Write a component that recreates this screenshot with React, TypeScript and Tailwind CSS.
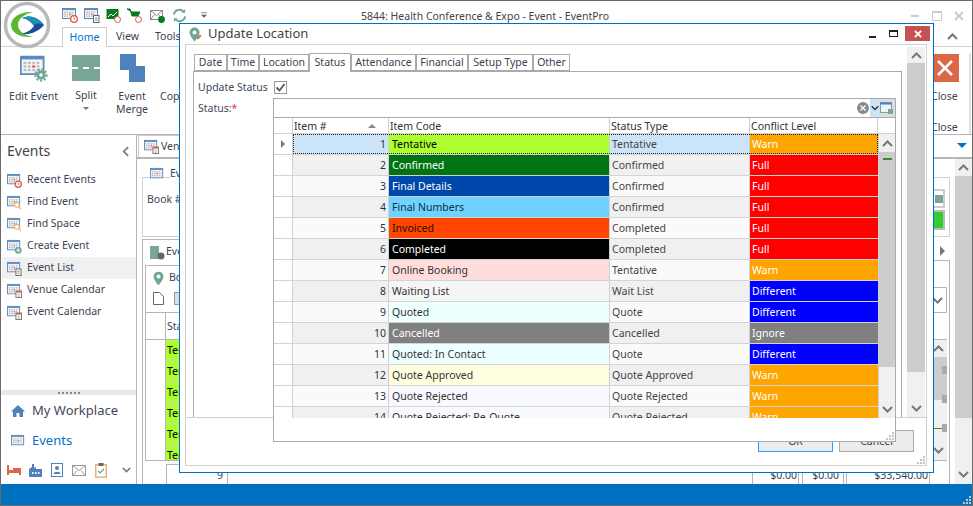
import React from "react";

type Badge = "clock" | "search" | "plus" | "doc" | "cal" | "gear" | "none";

function Cal({ badge = "none", className = "w-4 h-4" }: { badge?: Badge; className?: string }) {
  return (
    <svg viewBox="0 0 16 16" className={className}>
      <rect x="0.500" y="1.500" width="13" height="10" fill="#f4f4f4" stroke="#5b8bbd" />
      <rect x="0.500" y="1.500" width="13" height="1.600" fill="#5b8bbd" />
      {[2, 4.5, 7, 9.5].map((x) =>
        [4.5, 6.5, 8.5].map((y) => <rect key={`${x}-${y}`} x={x} y={y} width="1.600" height="1.300" fill={x === 7 && y === 6.5 ? "#d9534f" : "#bdbdbd"} />)
      )}
      {badge === "clock" && (
        <g>
          <circle cx="12" cy="12" r="3.300" fill="#fff" stroke="#d9534f" strokeWidth="1.300" />
          <path d="M12 10.200V12h1.500" stroke="#d9534f" fill="none" strokeWidth="0.800" />
        </g>
      )}
      {badge === "search" && (
        <g fill="none" stroke="#e8b26b" strokeWidth="1.200">
          <circle cx="10.500" cy="10.500" r="2.600" fill="#fff" />
          <path d="M12.500 12.500 15 15" />
        </g>
      )}
      {badge === "plus" && (
        <g>
          <circle cx="12" cy="12" r="3.600" fill="#6ea797" />
          <path d="M12 10v4M10 12h4" stroke="#fff" strokeWidth="1" />
        </g>
      )}
      {badge === "doc" && (
        <g>
          <rect x="9.500" y="8.500" width="5.500" height="7" fill="#fff" stroke="#666" />
          <path d="M11 11h2.500M11 13h2.500" stroke="#666" strokeWidth="0.800" />
        </g>
      )}
      {badge === "cal" && (
        <g>
          <rect x="9.500" y="8.500" width="6" height="7" fill="#fff" stroke="#777" />
          <rect x="9.500" y="8.500" width="6" height="1.800" fill="#dd6647" />
          <path d="M11 12h3M11 14h3" stroke="#999" strokeWidth="0.800" />
        </g>
      )}
      {badge === "gear" && (
        <g>
          <circle cx="12" cy="12" r="2.700" fill="#6ea797" />
          <circle cx="12" cy="12" r="3.300" fill="none" stroke="#6ea797" strokeWidth="1" strokeDasharray="1.200 1" />
          <circle cx="12" cy="12" r="1" fill="#fff" />
        </g>
      )}
    </svg>
  );
}

function Pin({ className = "w-3 h-4" }: { className?: string }) {
  return (
    <svg viewBox="0 0 12 16" className={className}>
      <path d="M6 0.500a5.400 5.400 0 0 0-5.400 5.400C.6 9.500 6 15.500 6 15.500s5.400-6 5.400-9.600A5.400 5.400 0 0 0 6 .5z" fill="#6ea797" />
      <circle cx="6" cy="5.800" r="2.200" fill="#fff" />
    </svg>
  );
}

function Chevron({ dir, className = "w-[11px] h-[7px]", color = "#777" }: { dir: "up" | "down"; className?: string; color?: string }) {
  return (
    <svg viewBox="0 0 11 7" className={className}>
      <path d={dir === "up" ? "M1 6l4.500-4.500L10 6" : "M1 1l4.500 4.500L10 1"} fill="none" stroke={color} strokeWidth="2" />
    </svg>
  );
}

function Logo() {
  return (
    <svg viewBox="0 0 48 48" className="w-[48px] h-[48px] shrink-0">
      <circle cx="24" cy="24" r="21.500" fill="#fff" stroke="#b9b9b9" strokeWidth="3.500" />
      <path d="M30 11C18 10 8 16 8 24C8 31 16 37 30 36C20 34 15 29 15 24C15 18 21 13 30 11z" fill="#58b833" />
      <path d="M19 17C28 13 36 17 41 24C36 30 28 34 19 33C25 31 29 28 31 25C28 21 25 18 19 17z" fill="#1b4d9b" />
      <path d="M19 17C28 13 36 17 41 24C37 22 32 22 31 25C28 21 25 18 19 17z" fill="#1f8fb8" />
    </svg>
  );
}

function Qat() {
  return (
    <div className="flex items-center h-[16px]">
      <Cal badge="clock" className="w-[16px] h-[16px]" />
      <Cal badge="doc" className="w-[16px] h-[16px] ml-[6px]" />
      <svg viewBox="0 0 15 15" className="w-[15px] h-[15px] ml-[6px]">
        <rect x="0.500" y="1" width="12" height="10" fill="#0a7a1e" />
        <path d="M2 9l3-3 2 2 4-4" stroke="#fff" fill="none" />
        <circle cx="11.500" cy="11.500" r="3" fill="#fff" stroke="#d9534f" />
      </svg>
      <svg viewBox="0 0 15 15" className="w-[15px] h-[15px] ml-[6px]">
        <path d="M0 1h3l2 7h6l2-4H5z" fill="#0a7a1e" stroke="#0a7a1e" />
        <circle cx="11.500" cy="11.500" r="3" fill="#fff" stroke="#d9534f" />
      </svg>
      <svg viewBox="0 0 15 15" className="w-[15px] h-[15px] ml-[8px]">
        <rect x="0.500" y="2.500" width="12" height="9" fill="#fff" stroke="#888" />
        <path d="M0.500 2.500l6 5 6-5M.5 11.500l4-5M12.500 11.500l-4-5" stroke="#888" fill="none" />
        <circle cx="11.500" cy="11.500" r="3.400" fill="#0a7a1e" />
      </svg>
      <svg viewBox="0 0 16 16" className="w-[15px] h-[15px] ml-[7px]">
        <path d="M2 7a6 6 0 0 1 10.500-3M14 9a6 6 0 0 1-10.500 3" stroke="#6ea797" strokeWidth="2" fill="none" />
        <path d="M14 1v4h-4zM2 15v-4h4z" fill="#6ea797" />
      </svg>
      <svg viewBox="0 0 8 7" className="w-[6px] h-[6px] ml-[14px]">
        <path d="M0 0h8v1H0zM0 3h8L4 7z" fill="#666" />
      </svg>
    </div>
  );
}

function Ribbon() {
  return (
    <div className="h-[134px] shrink-0 border-b border-[#b5b5b5] flex flex-col">
      <div className="flex h-[46px] border-b border-[#d0d0d0]">
        <div className="w-[56px] pl-[2px] pt-[0px]">
          <Logo />
        </div>
        <div className="flex-1 flex flex-col pl-[5px]">
          <div className="flex pt-[6px] h-[27px]">
            <Qat />
            <div className="flex-1 text-center pr-[148px] pt-[1px] text-[#444] leading-[16px]">5844: Health Conference &amp; Expo - Event - EventPro</div>
            <div className="flex items-center pr-[8px] pb-[2px]">
              <div className="w-[8px] h-[2px] bg-[#ccc]" />
              <div className="w-[10px] h-[10px] border border-t-2 border-[#ccc] ml-[13px]" />
              <svg viewBox="0 0 10 10" className="w-[10px] h-[10px] ml-[12px]"><path d="M1 1l8 8M9 1l-8 8" stroke="#ccc" strokeWidth="2" /></svg>
            </div>
          </div>
          <div className="flex h-[19px] items-stretch">
            <div className="w-[45px] border border-b-0 border-[#ccc] bg-white text-[#0072c6] text-center leading-[18px] -mb-[1px] z-10">Home</div>
            <div className="ml-[9px] leading-[19px]">View</div>
            <div className="ml-[16px] leading-[19px]">Tools</div>
            <div className="ml-auto mr-[14px] flex items-center">
              <Chevron dir="up" />
            </div>
          </div>
        </div>
      </div>
      <div className="flex flex-1 pt-[7px]">
        <div className="w-[65px] flex flex-col items-center">
          <Cal badge="gear" className="w-[28px] h-[28px]" />
          <div className="mt-[8px] leading-[13px]">Edit Event</div>
        </div>
        <div className="w-[40px] flex flex-col items-center">
          <div className="w-[28px] h-[26px] bg-[#79a699] flex items-center mt-[1px]">
            <div className="w-full border-t-2 border-dashed border-white" />
          </div>
          <div className="mt-[8px] leading-[13px]">Split</div>
          <div className="mt-[5px] w-0 h-0 border-x-[3px] border-x-transparent border-t-[3px] border-t-[#777]" />
        </div>
        <div className="w-[50px] flex flex-col items-center ml-[1px]">
          <div className="w-[25px] h-[28px] flex flex-col">
            <div className="w-[16px] h-[16px] bg-[#4f81bd]" />
            <div className="w-[16px] h-[16px] bg-[#4f81bd] ml-[9px] -mt-[4px]" />
          </div>
          <div className="mt-[8px] leading-[13px] text-center">Event<br />Merge</div>
        </div>
        <div className="ml-[3px] pt-[36px] leading-[13px]">Copy</div>
        <div className="ml-auto mr-[9px] w-[29px] flex flex-col">
          <div className="w-[28px] h-[28px] bg-[#dd6647] flex items-center justify-center">
            <svg viewBox="0 0 16 16" className="w-[16px] h-[16px]"><path d="M1 1l14 14M15 1L1 15" stroke="#fff" strokeWidth="2.500" /></svg>
          </div>
          <div className="mt-[8px] leading-[13px]">Close</div>
          <div className="mt-[18px] leading-[13px]">Close</div>
        </div>
        <div className="w-[2px] mr-[1px] bg-[#e0e0e0]" />
      </div>
    </div>
  );
}

const navItems: [string, Badge][] = [
  ["Recent Events", "clock"],
  ["Find Event", "search"],
  ["Find Space", "search"],
  ["Create Event", "plus"],
  ["Event List", "doc"],
  ["Venue Calendar", "cal"],
  ["Event Calendar", "cal"],
];

function Sidebar() {
  return (
    <div className="w-[136px] shrink-0 border-r border-[#b5b5b5] flex flex-col">
      <div className="flex items-center justify-between h-[34px] pl-[6px] pr-[7px] pb-[2px] text-[14px] leading-[20px] text-[#444]">
        <span>Events</span>
        <svg viewBox="0 0 8 12" className="w-[7px] h-[11px]"><path d="M7 1L2 6l5 5" stroke="#777" strokeWidth="2" fill="none" /></svg>
      </div>
      <div className="flex flex-col pl-[1px]">
        {navItems.map(([label, b]) => (
          <div key={label} className={`h-[22px] flex items-center pl-[5px] gap-[5px] ${label === "Event List" ? "bg-[#f0f0f0]" : ""}`}>
            <Cal badge={b} className="w-[15px] h-[15px]" />
            <span>{label}</span>
          </div>
        ))}
      </div>
      <div className="flex-1" />
      <div className="h-[5px] bg-[#e8e8e8] flex items-center justify-center gap-[2px]">
        {[0, 1, 2, 3, 4, 5].map((i) => <div key={i} className="w-[2px] h-[2px] bg-[#888]" />)}
      </div>
      <div className="h-[30px] mt-[1px] flex items-center pl-[10px] gap-[7px] text-[13px] text-[#404a5a]">
        <svg viewBox="0 0 14 12" className="w-[14px] h-[12px]"><path d="M7 0L0 6.500h2V12h3.500V8h3v4H12V6.500h2z" fill="#4f81bd" /></svg>
        <span>My Workplace</span>
      </div>
      <div className="h-[30px] flex items-center pl-[10px] gap-[6px] text-[13px] text-[#0072c6]">
        <Cal className="w-[15px] h-[15px]" />
        <span>Events</span>
      </div>
      <div className="h-[28px] flex items-center pl-[6px]">
        <svg viewBox="0 0 14 10" className="w-[14px] h-[10px]"><path d="M0 0h2v5h4V3h8v7h-2V8H2v2H0z" fill="#dd6647" /></svg>
        <svg viewBox="0 0 13 13" className="w-[13px] h-[13px] ml-[8px]"><path d="M0 13V5l3-2V0h2v4l2-1v2h6v8z" fill="#4f81bd" /><path d="M3 8h1.500v2H3zM6 8h1.500v2H6zM9 8h1.500v2H9z" fill="#fff" /></svg>
        <svg viewBox="0 0 13 14" className="w-[13px] h-[14px] ml-[9px]"><rect x="0.500" y="0.500" width="11" height="13" fill="#fff" stroke="#4f81bd" /><circle cx="6" cy="5" r="2" fill="#4f81bd" /><path d="M2.500 11c0-3 7-3 7 0z" fill="#4f81bd" /></svg>
        <svg viewBox="0 0 14 11" className="w-[14px] h-[11px] ml-[8px]"><rect x="0.500" y="0.500" width="13" height="10" fill="#fff" stroke="#999" /><path d="M.5.500l6.500 5 6.500-5M.5 10.500l4.500-5M13.500 10.500l-4.500-5" stroke="#999" fill="none" /></svg>
        <svg viewBox="0 0 12 15" className="w-[12px] h-[15px] ml-[9px]"><rect x="0.750" y="1.750" width="10.500" height="12.500" fill="#fff" stroke="#e3b877" strokeWidth="1.500" /><rect x="3.500" y="0" width="5" height="3" fill="#666" /><path d="M3 8l2 2 4-4" stroke="#6ea797" fill="none" strokeWidth="1.200" /></svg>
        <svg viewBox="0 0 11 7" className="w-[9px] h-[6px] ml-[15px]"><path d="M1 1l4.500 4.500L10 1" fill="none" stroke="#777" strokeWidth="2" /></svg>
      </div>
    </div>
  );
}

function MainBehind() {
  return (
    <div className="flex-1 flex flex-col min-w-0">
      <div className="h-[24px] shrink-0 flex border-b-2 border-[#b5b5b5] pl-[1px] items-end">
        <div className="w-[60px] h-[22px] border border-b-0 border-[#ccc] flex items-center pl-[5px] gap-[2px] overflow-hidden">
          <Cal badge="cal" className="w-[15px] h-[15px] shrink-0" />
          <span>Venue</span>
        </div>
        <div className="ml-auto mr-[5px] mb-[9px] w-0 h-0 border-x-[5px] border-x-transparent border-t-[5px] border-t-[#0072c6]" />
      </div>
      <div className="flex-1 flex min-h-0">
        <div className="flex-1 flex flex-col min-w-0 pl-[5px] pr-[5px] pt-[18px]">
          <div className="h-[60px] shrink-0 border border-[#d0d0d0] flex flex-col">
            <div className="flex items-center h-[20px] -mt-[14px] pl-[7px] gap-[5px] shrink-0">
              <Cal className="w-[15px] h-[15px]" />
              <span className="bg-white">Event</span>
            </div>
            <div className="flex justify-between pl-[4px] pr-[4px] mt-[8px]">
              <span>Book #</span>
              <div className="flex flex-col -mt-[3px] gap-[2px]">
                <div className="w-[21px] h-[19px] border-2 border-[#ccc] bg-white flex items-center justify-end"><div className="w-[8px] h-[8px] bg-[#79a699]" /></div>
                <div className="w-[21px] h-[20px] border-2 border-[#bbb] bg-[#32cd32]" />
              </div>
            </div>
          </div>
          <div className="flex-1 min-h-0 mt-[2px] border-l border-[#b5b5b5] flex flex-col">
            <div className="h-[22px] shrink-0 flex">
              <div className="w-[37px] border-t border-[#b5b5b5] flex items-center pl-[6px] gap-[1px] pt-[2px]">
                <svg viewBox="0 0 16 16" className="w-[16px] h-[16px] shrink-0"><rect x="1" y="2" width="9" height="13" fill="#79a699" /><circle cx="12" cy="12" r="3.500" fill="#666" /></svg>
                <span>Event</span>
              </div>
              <div className="flex-1 border-b border-[#b5b5b5] flex justify-end items-center pr-[5px] pt-[2px]">
                <div className="w-0 h-0 border-y-[5px] border-y-transparent border-l-[5px] border-l-[#777]" />
              </div>
            </div>
            <div className="flex-1 min-h-0 border-r border-[#b5b5b5] flex flex-col pt-[4px]">
              <div className="flex-1 min-h-0 ml-[2px] mr-[2px] border-l border-[#b5b5b5] flex flex-col">
                <div className="h-[22px] shrink-0 w-[33px] border-t border-[#b5b5b5] flex items-center pl-[7px] gap-[5px] pt-[3px] overflow-hidden">
                  <Pin className="w-[11px] h-[15px] shrink-0" />
                  <span>Book</span>
                </div>
                <div className="h-[26px] shrink-0 border-b border-[#b5b5b5] flex pl-[7px] pt-[5px] gap-[10px] justify-between">
                  <div className="flex gap-[10px]">
                    <svg viewBox="0 0 11 13" className="w-[11px] h-[13px]"><path d="M.5.500h6l4 4v8H.5z" fill="#fff" stroke="#666" /></svg>
                    <svg viewBox="0 0 11 13" className="w-[11px] h-[13px]"><rect x="0.500" y="0.500" width="10" height="12" fill="#ddd" stroke="#999" /></svg>
                  </div>
                  <div className="w-[18px] -mt-[5px] border-t border-r border-[#b5b5b5] flex items-center justify-center">
                    <Chevron dir="down" />
                  </div>
                </div>
                <div className="h-[27px] shrink-0 border-b border-[#b5b5b5] pl-[19px] flex justify-between">
                  <div className="w-[60px] border-l border-[#b5b5b5] pl-[1px] leading-[26px]">Status</div>
                </div>
                <div className="h-[121px] shrink-0 flex border-b border-[#b5b5b5] overflow-hidden">
                  <div className="w-[19px] shrink-0" />
                  <div className="w-[62px] shrink-0 flex flex-col">
                    {[0, 1, 2, 3, 4, 5].map((i) => (
                      <div key={i} className="h-[21px] shrink-0 border-b border-[#d0d0d0] border-l border-l-[#b5b5b5] bg-[#adff2f] text-black leading-[20px] pl-[1px]">Tentative</div>
                    ))}
                  </div>
                  <div className="flex-1" />
                  <div className="w-[18px] shrink-0 bg-[#f0f0f0] flex flex-col relative">
                    <div className="h-[17px] shrink-0 flex items-center justify-center"><Chevron dir="up" /></div>
                    <div className="h-[43px] shrink-0 bg-[#ccc]" />
                    <div className="flex-1 flex items-end justify-center pb-[6px]"><Chevron dir="down" /></div>
                    <div className="absolute right-0 top-[26px] w-[5px] h-[8px] bg-[#aaa]" />
                    <div className="absolute right-0 top-[55px] w-[5px] h-[8px] bg-[#aaa]" />
                    <div className="absolute right-0 top-[84px] w-[5px] h-[8px] bg-[#aaa]" />
                    <div className="absolute left-0 right-[5px] top-[88px] h-[1px] bg-[#3c8a2e]" />
                  </div>
                </div>
              </div>
              <div className="h-[23px] shrink-0 flex pl-[23px] pr-[19px] pt-[3px]">
                <div className="w-[62px] border-x border-t border-[#b5b5b5] text-right pr-[4px] leading-[20px]">9</div>
                <div className="flex-1" />
                <div className="w-[47px] border-x border-t border-[#b5b5b5] text-right pr-[1px] leading-[20px]">$0.00</div>
                <div className="w-[42px] ml-[3px] border-x border-t border-[#b5b5b5] text-right pr-[4px] leading-[20px]">$0.00</div>
                <div className="w-[84px] ml-[2px] border-x border-t border-[#b5b5b5] text-right pr-[1px] leading-[20px]">$33,540.00</div>
              </div>
            </div>
          </div>
        </div>
        <div className="w-[17px] shrink-0 flex flex-col bg-[#f0f0f0]">
          <div className="h-[17px] flex items-center justify-center"><Chevron dir="up" /></div>
          <div className="h-[242px] bg-[#ccc]" />
          <div className="flex-1 flex items-end justify-center pb-[6px]"><Chevron dir="down" /></div>
        </div>
      </div>
    </div>
  );
}

type Row = { n: number; code: string; bg: string; fg: string; type: string; level: "Warn" | "Full" | "Different" | "Ignore" };

const rows: Row[] = [
  { n: 1, code: "Tentative", bg: "bg-[#adff2f]", fg: "text-black", type: "Tentative", level: "Warn" },
  { n: 2, code: "Confirmed", bg: "bg-[#007413]", fg: "text-white", type: "Confirmed", level: "Full" },
  { n: 3, code: "Final Details", bg: "bg-[#0047ab]", fg: "text-white", type: "Confirmed", level: "Full" },
  { n: 4, code: "Final Numbers", bg: "bg-[#6ed3ff]", fg: "text-[#1a2a3a]", type: "Confirmed", level: "Full" },
  { n: 5, code: "Invoiced", bg: "bg-[#ff4500]", fg: "text-[#221100]", type: "Completed", level: "Full" },
  { n: 6, code: "Completed", bg: "bg-black", fg: "text-white", type: "Completed", level: "Full" },
  { n: 7, code: "Online Booking", bg: "bg-[#ffdddd]", fg: "text-[#333]", type: "Tentative", level: "Warn" },
  { n: 8, code: "Waiting List", bg: "bg-[#f5f5f5]", fg: "text-[#333]", type: "Wait List", level: "Different" },
  { n: 9, code: "Quoted", bg: "bg-[#eeffff]", fg: "text-[#333]", type: "Quote", level: "Different" },
  { n: 10, code: "Cancelled", bg: "bg-[#808080]", fg: "text-white", type: "Cancelled", level: "Ignore" },
  { n: 11, code: "Quoted: In Contact", bg: "bg-[#eeffff]", fg: "text-[#333]", type: "Quote", level: "Different" },
  { n: 12, code: "Quote Approved", bg: "bg-[#ffffdf]", fg: "text-[#333]", type: "Quote Approved", level: "Warn" },
  { n: 13, code: "Quote Rejected", bg: "bg-[#f8f8ff]", fg: "text-[#333]", type: "Quote Rejected", level: "Warn" },
  { n: 14, code: "Quote Rejected: Re-Quote", bg: "bg-[#f8f8ff]", fg: "text-[#333]", type: "Quote Rejected", level: "Warn" },
];

const levelBg: Record<Row["level"], string> = {
  Warn: "bg-[#ffa500]",
  Full: "bg-[#ff0000]",
  Different: "bg-[#0000ff]",
  Ignore: "bg-[#808080]",
};

function StatusGrid() {
  return (
    <div className="absolute left-[93px] top-[74px] w-[623px] h-[344px] bg-white border border-[#aaa] flex flex-col">
      <div className="h-[19px] shrink-0 flex justify-end items-stretch border-b border-[#aaa]">
        <div className="flex items-center pr-[1px]">
          <svg viewBox="0 0 12 12" className="w-[12px] h-[12px]"><circle cx="6" cy="6" r="6" fill="#8a8a8a" /><path d="M3.500 3.500l5 5M8.500 3.500l-5 5" stroke="#fff" strokeWidth="1.300" /></svg>
        </div>
        <div className="w-[9px] bg-[#cce4f7] flex items-center justify-center"><Chevron dir="down" className="w-[8px] h-[6px]" color="#333" /></div>
        <div className="w-[16px] bg-[#ddd] flex items-center justify-center">
          <svg viewBox="0 0 14 14" className="w-[14px] h-[14px]"><rect x="0.500" y="1.500" width="11" height="10" fill="#eef2f6" stroke="#7d9cba" /><rect x="0.500" y="1.500" width="11" height="2" fill="#4f81bd" /><rect x="8" y="8" width="5" height="5" fill="#79a699" /></svg>
        </div>
      </div>
      <div className="h-[16px] shrink-0 flex border-b border-[#d0d0d0] leading-[16px] text-[#333]">
        <div className="w-[19px] border-r border-[#d0d0d0]" />
        <div className="w-[96px] border-r border-[#d0d0d0] pl-[1px] flex items-center justify-between pr-[12px]">
          <span>Item #</span>
          <span className="w-0 h-0 border-x-[4px] border-x-transparent border-b-[4px] border-b-[#888]" />
        </div>
        <div className="w-[221px] border-r border-[#d0d0d0] pl-[1px]">Item Code</div>
        <div className="w-[140px] border-r border-[#d0d0d0] pl-[1px]">Status Type</div>
        <div className="w-[128px] border-r border-[#d0d0d0] pl-[1px]">Conflict Level</div>
      </div>
      <div className="h-[284px] shrink-0 flex overflow-hidden">
        <div className="w-[604px] flex flex-col shrink-0">
          {rows.map((r, i) => (
            <div key={r.n} className="h-[21px] shrink-0 flex border-b border-[#d4d4d4] leading-[20px] relative">
              <div className="w-[19px] border-r border-[#d0d0d0] flex items-center justify-center shrink-0">
                {i === 0 && <div className="w-0 h-0 border-y-[4px] border-y-transparent border-l-[4px] border-l-[#777]" />}
              </div>
              <div className={`w-[96px] shrink-0 border-r border-[#d0d0d0] text-right pr-[2px] text-[#333] ${i === 0 ? "bg-[#cce4f7]" : i % 2 ? "bg-[#f0f0f0]" : "bg-[#fafafa]"}`}>{r.n}</div>
              <div className={`w-[221px] shrink-0 border-r border-[#d0d0d0] pl-[3px] ${r.bg} ${r.fg}`}>{r.code}</div>
              <div className={`w-[140px] shrink-0 border-r border-[#d0d0d0] pl-[2px] text-[#444] ${i === 0 ? "bg-[#cce4f7]" : i % 2 ? "bg-[#f0f0f0]" : "bg-[#fafafa]"}`}>{r.type}</div>
              <div className={`w-[128px] shrink-0 pl-[2px] text-white ${levelBg[r.level]}`}>{r.level}</div>
              {i === 0 && <div className="absolute left-[19px] right-0 top-0 bottom-0 border border-dotted border-[#222]" />}
            </div>
          ))}
        </div>
        <div className="w-[17px] shrink-0 border-l border-[#d0d0d0] bg-[#f0f0f0] flex flex-col">
          <div className="h-[18px] shrink-0 flex items-center justify-center"><Chevron dir="up" /></div>
          <div className="h-[215px] shrink-0 bg-[#ccc] pt-[6px] flex justify-center">
            <div className="w-[9px] h-[2px] bg-[#3c8a2e]" />
          </div>
          <div className="flex-1 flex items-end justify-center pb-[5px]"><Chevron dir="down" /></div>
        </div>
      </div>
      <div className="flex-1 flex justify-end items-end">
        <Grip />
      </div>
    </div>
  );
}

function Grip() {
  return (
    <svg viewBox="0 0 8 8" className="w-[8px] h-[8px] mb-[1px] mr-[1px]">
      <path d="M6 0h2v2H6zM3 3h2v2H3zM6 3h2v2H6zM0 6h2v2H0zM3 6h2v2H3zM6 6h2v2H6z" fill="#c4c4c4" />
    </svg>
  );
}

const tabs = ["Date", "Time", "Location", "Status", "Attendance", "Financial", "Setup Type", "Other"];
const tabW: Record<string, string> = {
  Date: "w-[33px]",
  Time: "w-[32px]",
  Location: "w-[50px]",
  Status: "w-[42px]",
  Attendance: "w-[65px]",
  Financial: "w-[52px]",
  "Setup Type": "w-[65px]",
  Other: "w-[37px]",
};

function Dialog() {
  return (
    <div className="absolute left-[178px] top-[22px] w-[755px] h-[450px] bg-white border border-[#0072c6] flex flex-col">
      <div className="h-[20px] shrink-0 flex items-center pl-[9px] text-[13px] text-[#444]">
        <svg viewBox="0 0 14 16" className="w-[13px] h-[15px]">
          <path d="M6 0.500a5.400 5.400 0 0 0-5.400 5.400C.6 9.500 6 15.500 6 15.500s5.400-6 5.400-9.600A5.400 5.400 0 0 0 6 .5z" fill="#6ea797" />
          <circle cx="6" cy="5.800" r="2.200" fill="#fff" />
          <path d="M8 12l4-4 1.500 1.500-4 4z" fill="#dd6647" />
        </svg>
        <span className="ml-[6px]">Update Location</span>
        <div className="ml-auto flex items-center -mt-[1px]">
          <div className="w-[7px] h-[2px] bg-[#222] mt-[6px]" />
          <div className="w-[9px] h-[7px] border border-t-2 border-[#222] ml-[13px]" />
          <div className="w-[25px] h-[15px] bg-[#c75050] flex items-center justify-center ml-[7px] mr-[3px]">
            <svg viewBox="0 0 9 9" className="w-[8px] h-[8px]"><path d="M1 1l7 7M8 1L1 8" stroke="#fff" strokeWidth="2" /></svg>
          </div>
        </div>
      </div>
      <div className="flex-1 flex flex-col ml-[5px] mr-[6px] mb-[6px] border border-[#d0d0d0] bg-white relative">
        <div className="h-[373px] shrink-0 flex border-b border-[#cfcfcf]">
          <div className="flex-1 flex flex-col pl-[7px] pt-[7px] min-w-0">
            <div className="flex h-[19px] shrink-0 items-end pl-[1px]">
              {tabs.map((t) => (
                <div
                  key={t}
                  className={`${tabW[t]} text-center border border-[#aaa] ${t === "Status" ? "h-[19px] border-b-0 bg-white leading-[17px] -mb-[1px] z-10" : "h-[17px] bg-white leading-[15px]"}`}
                >
                  {t}
                </div>
              ))}
            </div>
            <div className="flex-1 mr-[5px] border-l border-t border-r border-[#aaa] pl-[4px] pt-[7px] flex flex-col">
              <div className="flex items-center h-[17px] shrink-0">
                <span className="w-[76px] text-[#404a5a]">Update Status</span>
                <svg viewBox="0 0 13 13" className="w-[13px] h-[13px]">
                  <rect x="0.500" y="0.500" width="12" height="12" fill="#fff" stroke="#999" />
                  <path d="M2.500 6.500L5.500 9.500 10.500 3" fill="none" stroke="#555" strokeWidth="1.800" />
                </svg>
              </div>
              <div className="mt-[5px] text-[#404a5a]">Status:<span className="text-[#e53935]">*</span></div>
            </div>
          </div>
          <div className="w-[18px] shrink-0 mt-[2px] mr-[1px] flex flex-col bg-[#f0f0f0]">
            <div className="h-[16px] shrink-0 flex items-center justify-center"><Chevron dir="up" /></div>
            <div className="h-[309px] shrink-0 bg-[#ccc]" />
            <div className="flex-1 flex items-end justify-center pb-[5px]"><Chevron dir="down" /></div>
          </div>
        </div>
        <div className="flex-1 flex justify-end pt-[12px] gap-[6px] pr-[12px]">
          <div className="w-[75px] h-[22px] border border-[#3399ff] bg-[#ececec] text-center leading-[20px]">OK</div>
          <div className="w-[75px] h-[22px] border border-[#aaa] bg-[#ececec] text-center leading-[20px]">Cancel</div>
        </div>
        <div className="absolute right-0 bottom-0"><Grip /></div>
      </div>
      <StatusGrid />
    </div>
  );
}

export default function App() {
  return (
    <div className="relative w-[973px] h-[506px] overflow-hidden bg-white border border-[#6b6b6b] flex flex-col font-['Noto_Sans',sans-serif] text-[10.500px] text-[#3a4352]">
      <Ribbon />
      <div className="flex-1 flex min-h-0">
        <Sidebar />
        <MainBehind />
      </div>
      <div className="h-[21px] shrink-0 bg-[#0070c0] flex justify-end items-end">
        <Grip />
      </div>
      <Dialog />
    </div>
  );
}
